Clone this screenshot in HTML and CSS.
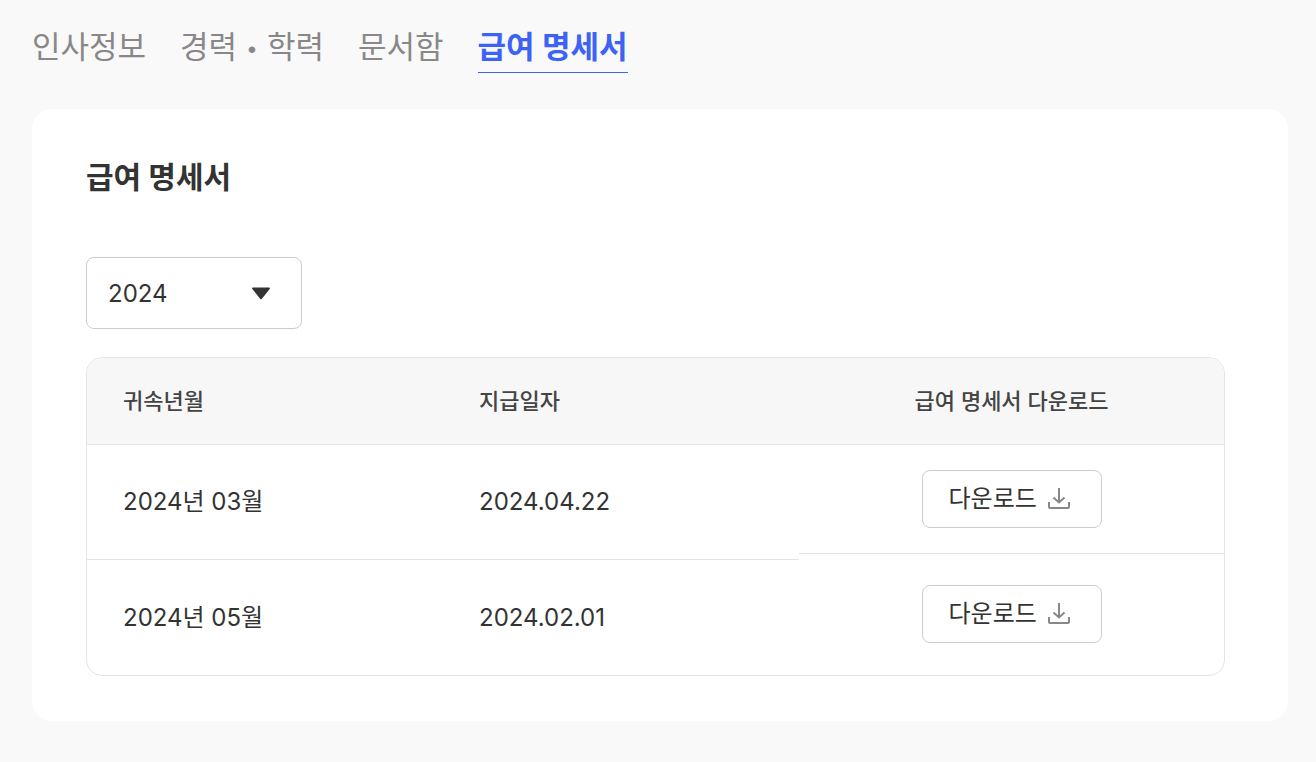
FILE: index.html
```
<!DOCTYPE html>
<html lang="ko">
<head>
  <meta charset="UTF-8" />
  <meta name="viewport" content="width=device-width, initial-scale=1.0" />
  <title>급여 명세서</title>
  <link rel="stylesheet" href="styles.css">
</head>
<body>
  <nav class="tabs">
    <a href="#info">인사정보</a>
    <a href="#career">경력 <span class="dot">•</span> 학력</a>
    <a href="#documents">문서함</a>
    <a href="#payslip" class="active">급여 명세서</a>
  </nav>

  <main class="card">
    <h1>급여 명세서</h1>

    <div class="year-select">
      <select id="year" aria-label="연도">
        <option>2024</option>
        <option>2023</option>
      </select>
      <svg class="arrow" width="18" height="13" viewBox="0 0 18 13" aria-hidden="true"><path d="M1 .5h16c1 0 1.200.9.700 1.500L9.700 11.900c-.4.5-1 .5-1.400 0L.3 2C-.2 1.400 0 .5 1 .5z" fill="#333"/></svg>
    </div>

    <div class="table-wrap">
      <table>
        <thead>
          <tr>
            <th class="month">귀속년월</th>
            <th class="date">지급일자</th>
            <th class="download">급여 명세서 다운로드</th>
          </tr>
        </thead>
        <tbody>
          <tr>
            <td>2024년 03월</td>
            <td>2024.04.22</td>
            <td class="download">
              <div class="download-box">
                <button class="download-button">다운로드
                  <svg width="24" height="24" viewBox="0 0 24 24" aria-hidden="true"><path d="M12 1v14M6.500 10.500l5.500 5 5.500-5M2 15v5q0 1 1 1h18q1 0 1-1v-5" fill="none" stroke="#888" stroke-width="2"/></svg>
                </button>
              </div>
            </td>
          </tr>
          <tr>
            <td>2024년 05월</td>
            <td>2024.02.01</td>
            <td class="download">
              <div class="download-box">
                <button class="download-button">다운로드
                  <svg width="24" height="24" viewBox="0 0 24 24" aria-hidden="true"><path d="M12 1v14M6.500 10.500l5.500 5 5.500-5M2 15v5q0 1 1 1h18q1 0 1-1v-5" fill="none" stroke="#888" stroke-width="2"/></svg>
                </button>
              </div>
            </td>
          </tr>
        </tbody>
      </table>
    </div>
  </main>
</body>
</html>
```
FILE: styles.css
```
* {
  box-sizing: border-box;
}

body {
  font-family: Inter, 'Noto Sans CJK KR', sans-serif;
  background-color: #f9f9f9;
  color: #333;
  margin: 0;
  padding: 21px 28px 40px 32px;
}

.tabs {
  display: flex;
  gap: 34px;
  margin-bottom: 36px;
}

.tabs a {
  color: #888;
  font-size: 31px;
  line-height: 51px;
  text-decoration: none;
  border-bottom: 1px solid transparent;
}

.tabs .dot {
  font-family: 'Liberation Sans', sans-serif;
  font-size: 24px;
  line-height: 1;
  padding: 0 2px;
}

.tabs a.active {
  color: #3d63f5;
  font-weight: bold;
  border-bottom-color: #3d63f5;
}

.card {
  background-color: white;
  border-radius: 20px;
  padding: 48px 63px 45px 54px;
}

h1 {
  font-size: 30px;
  line-height: 40px;
  margin: 0 0 60px;
}

.year-select {
  position: relative;
  width: 216px;
  margin-bottom: 28px;
}

.year-select select {
  appearance: none;
  display: block;
  width: 100%;
  height: 72px;
  padding: 0 21px;
  font: inherit;
  font-size: 24px;
  color: #333;
  background-color: white;
  border: 1px solid #ccc;
  border-radius: 8px;
}

.year-select .arrow {
  position: absolute;
  top: 30px;
  right: 32px;
  pointer-events: none;
}

.table-wrap {
  border: 1px solid #e5e5e5;
  border-radius: 16px;
  overflow: hidden;
}

table {
  width: 100%;
  table-layout: fixed;
  border-collapse: separate;
  border-spacing: 0;
}

th, td {
  padding: 0 36px;
  line-height: 36px;
  text-align: left;
}

th {
  height: 87px;
  background-color: #f7f7f7;
  border-bottom: 1px solid #e5e5e5;
  font-size: 22px;
  font-weight: 500;
  color: #444;
}

.month, .date {
  width: 356px;
}

td {
  height: 115px;
  font-size: 24px;
  border-bottom: 1px solid #e5e5e5;
}

tr:last-child td {
  border-bottom: none;
}

.download {
  padding: 0;
  text-align: center;
}

td.download {
  border-bottom: none;
  vertical-align: top;
}

.download-box {
  display: flex;
  justify-content: center;
  height: 109px;
  padding-top: 25px;
  border-bottom: 1px solid #e5e5e5;
}

tr:last-child .download-box {
  border-bottom: none;
}

.download-button {
  display: flex;
  align-items: center;
  gap: 10px;
  width: 180px;
  height: 58px;
  padding: 0 26px;
  font: inherit;
  color: #333;
  background-color: white;
  border: 1px solid #ccc;
  border-radius: 8px;
  cursor: pointer;
}
```
